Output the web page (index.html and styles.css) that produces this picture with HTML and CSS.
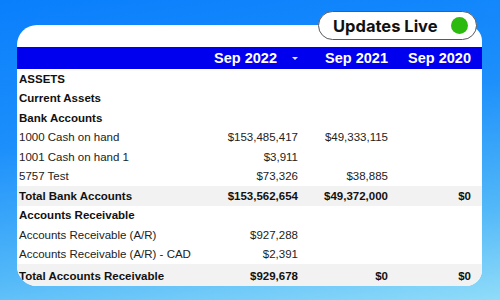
FILE: index.html
```html
<!DOCTYPE html>
<html>
<head>
<meta charset="utf-8">
<link rel="stylesheet" href="styles.css">
</head>
<body>
<div class="stage">
  <div class="card">
    <table class="report">
      <colgroup>
        <col class="c-label"><col class="c-v1"><col class="c-v2"><col class="c-v3">
      </colgroup>
      <thead>
        <tr class="head">
          <th></th>
          <th class="num"><span>Sep 2022</span><span class="caret"></span></th>
          <th class="num">Sep 2021</th>
          <th class="num">Sep 2020</th>
        </tr>
      </thead>
      <tbody>
        <tr class="bold"><td>ASSETS</td><td></td><td></td><td></td></tr>
        <tr class="bold"><td>Current Assets</td><td></td><td></td><td></td></tr>
        <tr class="bold"><td>Bank Accounts</td><td></td><td></td><td></td></tr>
        <tr><td>1000 Cash on hand</td><td class="num">$153,485,417</td><td class="num">$49,333,115</td><td></td></tr>
        <tr><td>1001 Cash on hand 1</td><td class="num">$3,911</td><td></td><td></td></tr>
        <tr><td>5757 Test</td><td class="num">$73,326</td><td class="num">$38,885</td><td></td></tr>
        <tr class="bold total"><td>Total Bank Accounts</td><td class="num">$153,562,654</td><td class="num">$49,372,000</td><td class="num">$0</td></tr>
        <tr class="bold"><td>Accounts Receivable</td><td></td><td></td><td></td></tr>
        <tr><td>Accounts Receivable (A/R)</td><td class="num">$927,288</td><td></td><td></td></tr>
        <tr><td>Accounts Receivable (A/R) - CAD</td><td class="num">$2,391</td><td></td><td></td></tr>
        <tr class="bold total last"><td>Total Accounts Receivable</td><td class="num">$929,678</td><td class="num">$0</td><td class="num">$0</td></tr>
      </tbody>
    </table>
  </div>
  <div class="badge"><span class="badge-text">Updates Live</span><span class="dot"></span></div>
</div>
</body>
</html>
```

FILE: styles.css
```css
html, body {
  margin: 0;
  padding: 0;
}
body {
  width: 500px;
  height: 300px;
  overflow: hidden;
  background: linear-gradient(172deg, #0a7ffc 0%, #1c8ffb 40%, #52b8f8 75%, #90dcf9 100%);
}
.stage {
  position: relative;
  width: 500px;
  height: 300px;
  padding-top: 25px;
  box-sizing: border-box;
}
.card {
  margin-left: 17px;
  width: 465px;
  height: 261px;
  background: #fff;
  border-radius: 20px 16px 16px 20px;
  overflow: hidden;
  padding-top: 22px;
  box-sizing: border-box;
}
.report {
  width: 465px;
  border-collapse: collapse;
  table-layout: fixed;
  font-family: "Liberation Sans", Arial, sans-serif;
  font-size: 11.5px;
  color: #222;
}
.c-label { width: 181px; }
.c-v1 { width: 100px; }
.c-v2 { width: 90px; }
.c-v3 { width: 94px; }
.report td, .report th {
  padding: 0;
  height: 19.5px;
  white-space: nowrap;
}
.report td:first-child { padding-left: 2px; }
.report td:last-child, .report th:last-child { padding-right: 11px; }
.num { text-align: right; }
.head th {
  height: 22px;
  background: #0000ee;
  color: #fff;
  font-size: 14.5px;
  font-weight: bold;
}
.head th:nth-child(2) { padding-right: 0; }
.caret {
  display: inline-block;
  width: 0;
  height: 0;
  border-left: 3px solid transparent;
  border-right: 3px solid transparent;
  border-top: 3px solid #dfe3ff;
  margin-left: 15px;
  vertical-align: middle;
  position: relative;
  top: -1px;
}
.bold td { font-weight: bold; color: #111; }
.total td { background: #f2f2f2; }
.last td { height: 24px; padding-bottom: 2px; }
.badge {
  position: absolute;
  left: 318px;
  top: 11px;
  width: 159px;
  height: 29px;
  box-sizing: border-box;
  background: #fff;
  border: 1px solid #5a5a5a;
  border-radius: 15px;
  display: flex;
  align-items: center;
  justify-content: space-between;
  padding: 0 8px 0 14px;
}
.badge-text {
  font-family: Inter, "Liberation Sans", sans-serif;
  font-weight: 700;
  font-size: 16.5px;
  color: #111;
  letter-spacing: 0;
}
.dot {
  width: 17px;
  height: 17px;
  border-radius: 50%;
  background: #2cba0e;
}
```
